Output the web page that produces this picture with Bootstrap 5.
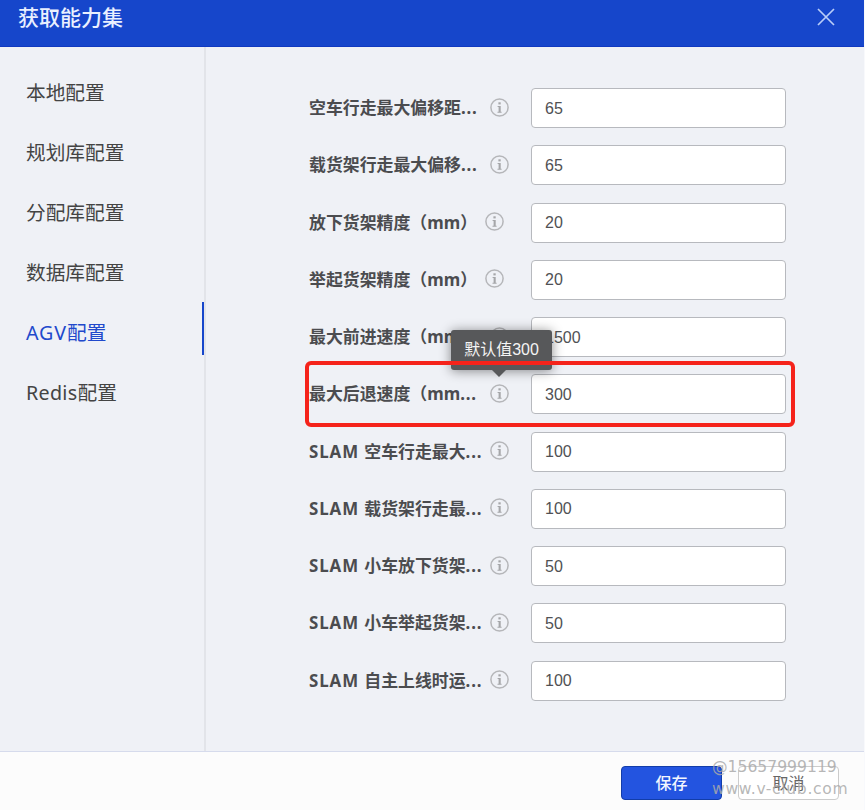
<!DOCTYPE html>
<html lang="zh-CN">
<head>
<meta charset="utf-8">
<meta name="viewport" content="width=device-width, initial-scale=1">
<title>获取能力集</title>
<link href="https://cdn.jsdelivr.net/npm/bootstrap@5.3.0/dist/css/bootstrap.min.css" rel="stylesheet">
<style>
body{width:865px;height:810px;overflow:hidden;background:#f8f9fc;font-family:"Noto Sans","Noto Sans CJK SC",sans-serif;color:#444}
.dialog-box{width:864px;height:810px;background:#eff1f6}
.dialog-head{height:47px;background:#1646cb;border-bottom:1px solid #1039c0;padding:0 29px 13px 18px;color:#e9f0ff}
.dialog-title{font-size:21px;line-height:32px;font-weight:500}
.side-menu{width:206px;border-right:2px solid #e2e4e9;padding-top:15px}
.side-menu .nav-link{height:60px;padding:0 0 0 26px;font-size:19.7px;line-height:62px;color:#444;white-space:nowrap}
.side-menu .nav-link.active{color:#2149cc}
.side-menu .active::after{content:"";float:right;width:2px;height:53px;background:#1646cb}
.agv{letter-spacing:.9px}
.redis{letter-spacing:.3px}
.form-pane{padding:41px 0 0 103px}
.field-row{height:57.25px}
.field-label{width:181px;font-size:16.9px;font-weight:700;line-height:40px;white-space:nowrap;color:#4b4c4f}
.field-label.unit{width:176px}
.dots{letter-spacing:.8px}
.slam{letter-spacing:.9px}
.info-icon{width:19px;height:19px;flex:none;margin-bottom:2px}
.field-input{width:255px;height:40px;padding:1px 13px 0;border:1px solid #b7b9be;border-radius:4px;font:16px "Liberation Sans",Arial,sans-serif;color:#505154;background:#fff}
.field-end{width:477px}
.highlight-frame{left:305px;top:361px;width:490px;height:66px;border:4px solid #f5231b;border-radius:6px;z-index:3}
.tip{left:451px;top:330px;width:101px;height:40px;background:#57585a;border-radius:3px;color:#f4f4f4;font:16px/39px "Liberation Sans","Noto Sans CJK SC",sans-serif;box-shadow:0 1px 12px rgba(0,0,0,.45);z-index:2}
.tip::after{content:"";position:absolute;left:41px;top:40px;border:7px solid transparent;border-top-color:#57585a;border-bottom:0}
.dialog-foot{height:59px;background:#fcfcfc;border-top:1px solid #d6dbec;padding:14px 25px 0 0;gap:16px}
.foot-btn{width:101px;height:34px;padding:0;font-size:16px;line-height:32px;border-radius:4px}
.btn-save,.btn-save:hover{background:#2354e0;border-color:#123da9;color:#f2f6ff;font-weight:500}
.btn-cancel{background:#fff;border-color:#ccc;color:#666}
.stamp{left:712px;color:rgba(170,170,170,.85);font-family:"DejaVu Sans",sans-serif;line-height:22px;white-space:nowrap;z-index:4}
.stamp-id{top:756px;font-size:15.6px}
.stamp-site{top:778px;font-size:15.6px;letter-spacing:.65px}
</style>
<script src="https://cdn.jsdelivr.net/npm/bootstrap@5.3.0/dist/js/bootstrap.bundle.min.js"></script>
</head>
<body class="position-relative">
<svg class="d-none"><symbol id="info" viewBox="0 0 19 19"><circle cx="9.5" cy="9.5" r="8.6" fill="none" stroke="#b5b6b9" stroke-width="1.5"/><rect x="8.4" y="4.3" width="2.3" height="2.1" fill="#a5a6a9"/><path d="M7.6 8h3.1v5.7h.9v1H7.5v-1h1.1V9H7.6z" fill="#a5a6a9"/></symbol></svg>
<div class="dialog-box d-flex flex-column">
  <header class="dialog-head d-flex justify-content-between align-items-center">
    <div class="dialog-title">获取能力集</div>
    <svg width="18" height="18" viewBox="0 0 18 18" stroke="#b9cdf8" stroke-width="1.7" fill="none"><path d="M1 1l16 16M17 1l-16 16"/></svg>
  </header>
  <main class="d-flex flex-grow-1">
    <nav class="side-menu nav flex-column flex-nowrap">
      <a class="nav-link">本地配置</a>
      <a class="nav-link">规划库配置</a>
      <a class="nav-link">分配库配置</a>
      <a class="nav-link">数据库配置</a>
      <a class="nav-link active"><span class="agv">AGV</span>配置</a>
      <a class="nav-link"><span class="redis">Redis</span>配置</a>
    </nav>
    <form class="form-pane">
      <div class="field-row"><div class="field-end d-flex align-items-center"><label class="field-label">空车行走最大偏移距<span class="dots">...</span></label><svg class="info-icon"><use href="#info"/></svg><input class="field-input ms-auto" value="65"></div></div>
      <div class="field-row"><div class="field-end d-flex align-items-center"><label class="field-label">载货架行走最大偏移<span class="dots">...</span></label><svg class="info-icon"><use href="#info"/></svg><input class="field-input ms-auto" value="65"></div></div>
      <div class="field-row"><div class="field-end d-flex align-items-center"><label class="field-label unit">放下货架精度（mm）</label><svg class="info-icon"><use href="#info"/></svg><input class="field-input ms-auto" value="20"></div></div>
      <div class="field-row"><div class="field-end d-flex align-items-center"><label class="field-label unit">举起货架精度（mm）</label><svg class="info-icon"><use href="#info"/></svg><input class="field-input ms-auto" value="20"></div></div>
      <div class="field-row"><div class="field-end d-flex align-items-center"><label class="field-label">最大前进速度（mm<span class="dots">...</span></label><svg class="info-icon"><use href="#info"/></svg><input class="field-input ms-auto" value="1500"></div></div>
      <div class="field-row"><div class="field-end d-flex align-items-center"><label class="field-label">最大后退速度（mm<span class="dots">...</span></label><svg class="info-icon"><use href="#info"/></svg><input class="field-input ms-auto" value="300"></div></div>
      <div class="field-row"><div class="field-end d-flex align-items-center"><label class="field-label"><span class="slam">SLAM </span>空车行走最大<span class="dots">...</span></label><svg class="info-icon"><use href="#info"/></svg><input class="field-input ms-auto" value="100"></div></div>
      <div class="field-row"><div class="field-end d-flex align-items-center"><label class="field-label"><span class="slam">SLAM </span>载货架行走最<span class="dots">...</span></label><svg class="info-icon"><use href="#info"/></svg><input class="field-input ms-auto" value="100"></div></div>
      <div class="field-row"><div class="field-end d-flex align-items-center"><label class="field-label"><span class="slam">SLAM </span>小车放下货架<span class="dots">...</span></label><svg class="info-icon"><use href="#info"/></svg><input class="field-input ms-auto" value="50"></div></div>
      <div class="field-row"><div class="field-end d-flex align-items-center"><label class="field-label"><span class="slam">SLAM </span>小车举起货架<span class="dots">...</span></label><svg class="info-icon"><use href="#info"/></svg><input class="field-input ms-auto" value="50"></div></div>
      <div class="field-row"><div class="field-end d-flex align-items-center"><label class="field-label"><span class="slam">SLAM </span>自主上线时运<span class="dots">...</span></label><svg class="info-icon"><use href="#info"/></svg><input class="field-input ms-auto" value="100"></div></div>
    </form>
  </main>
  <footer class="dialog-foot d-flex justify-content-end">
    <button class="btn foot-btn btn-save">保存</button>
    <button class="btn foot-btn btn-cancel">取消</button>
  </footer>
</div>
<div class="tip position-absolute text-center">默认值300</div>
<div class="highlight-frame position-absolute"></div>
<div class="stamp stamp-id position-absolute">@15657999119</div>
<div class="stamp stamp-site position-absolute">www.v-club.com</div>
</body>
</html>
